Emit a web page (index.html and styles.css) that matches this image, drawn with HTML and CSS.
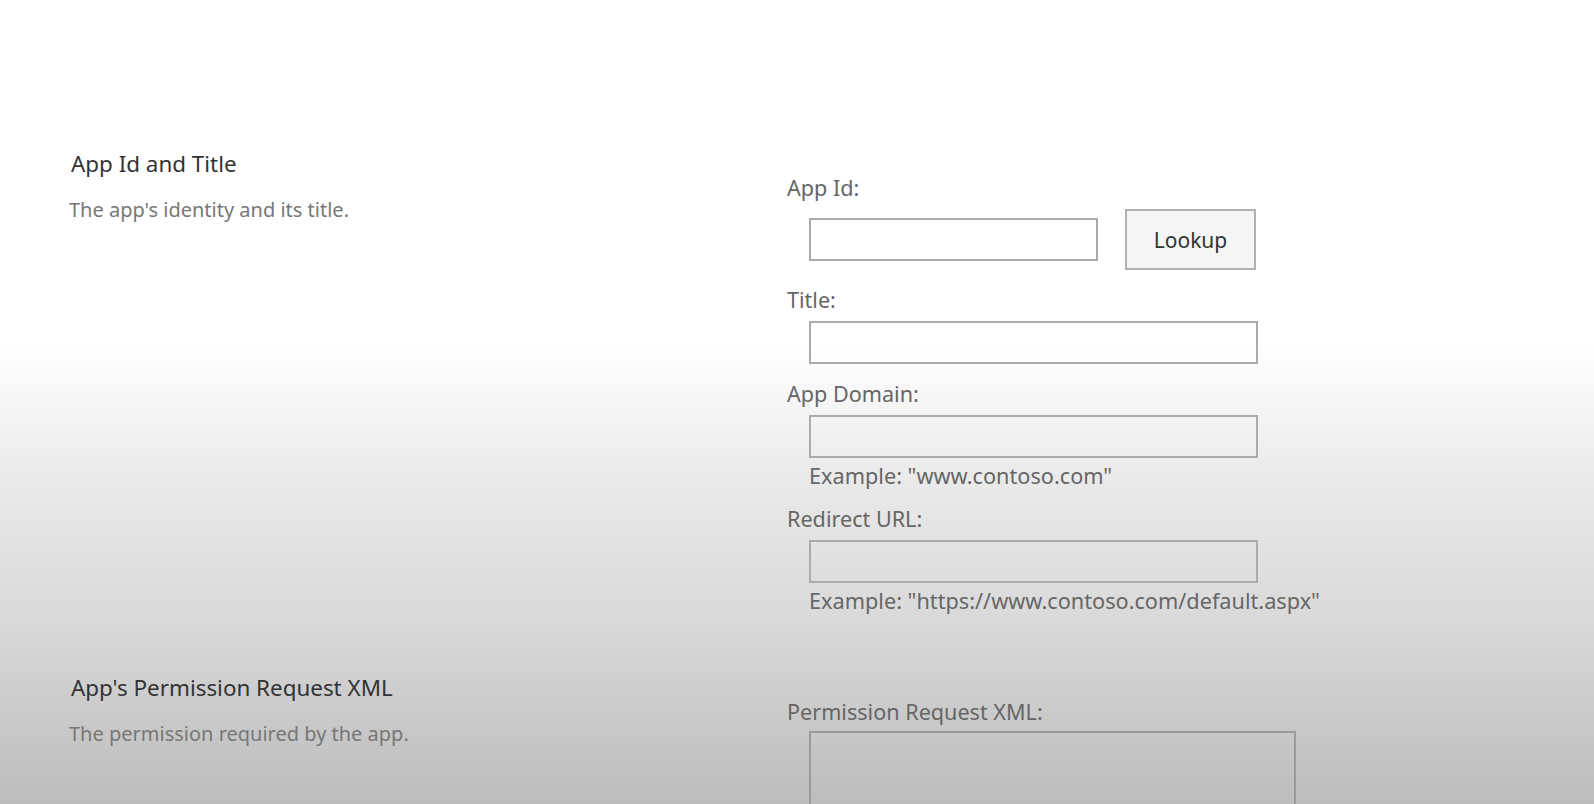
FILE: index.html
```html
<!DOCTYPE html>
<html lang="en">
<head>
  <meta charset="UTF-8" />
  <title>Register an App</title>
  <link rel="stylesheet" href="styles.css">
</head>
<body>
  <div class="page">
    <div class="section">
      <div class="section-info">
        <h3>App Id and Title</h3>
        <p>The app's identity and its title.</p>
      </div>
      <div class="section-fields">
        <div class="field">
          <label>App Id:</label>
          <div class="row">
            <input type="text" class="input short">
            <button class="btn">Lookup</button>
          </div>
        </div>
        <div class="field">
          <label>Title:</label>
          <div class="row">
            <input type="text" class="input">
          </div>
        </div>
        <div class="field">
          <label>App Domain:</label>
          <div class="row">
            <input type="text" class="input">
          </div>
          <div class="hint">Example: "www.contoso.com"</div>
        </div>
        <div class="field">
          <label>Redirect URL:</label>
          <div class="row">
            <input type="text" class="input">
          </div>
          <div class="hint">Example: "https://www.contoso.com/default.aspx"</div>
        </div>
      </div>
    </div>

    <div class="section">
      <div class="section-info">
        <h3>App's Permission Request XML</h3>
        <p>The permission required by the app.</p>
      </div>
      <div class="section-fields">
        <div class="field">
          <label>Permission Request XML:</label>
          <div class="row tight">
            <textarea class="xml"></textarea>
          </div>
        </div>
      </div>
    </div>
  </div>
</body>
</html>
```

FILE: styles.css
```css
html, body {
  height: 100%;
}
body {
  margin: 0;
  overflow: hidden;
  font-family: "Noto Sans", "Open Sans", sans-serif;
  background: linear-gradient(to bottom, #ffffff 0, #ffffff 345px, #ebebeb 470px, #d9d9d9 620px, #bcbcbc 804px);
}
.page {
  padding: 149px 0 0 71px;
}
.section {
  display: grid;
  grid-template-columns: 716px 1fr;
}
.section + .section {
  margin-top: 42px;
}
.section-info h3 {
  margin: 0;
  font-size: 22.4px;
  font-weight: normal;
  line-height: 30px;
  color: #333;
}
.section-info p {
  margin: 18px 0 0 -2px;
  font-size: 20px;
  line-height: 26px;
  color: #777;
}
.section-fields {
  padding-top: 26px;
}
.field {
  margin-bottom: 17px;
}
.field label {
  display: block;
  font-size: 21.6px;
  line-height: 26px;
  color: #666;
}
.row {
  display: flex;
  align-items: center;
  gap: 27px;
  margin: 8px 0 0 22px;
}
.row.tight {
  margin-top: 6px;
}
.input {
  box-sizing: border-box;
  width: 449px;
  height: 43px;
  border: 2px solid #ababab;
  background: transparent;
  font: inherit;
}
.input.short {
  width: 289px;
}
.btn {
  box-sizing: border-box;
  width: 131px;
  height: 61px;
  border: 2px solid #b0b0b0;
  background: rgba(0, 0, 0, 0.04);
  font-family: inherit;
  font-size: 21px;
  color: #333;
}
.hint {
  margin: 5px 0 0 22px;
  font-size: 21.7px;
  line-height: 26px;
  color: #666;
}
.xml {
  box-sizing: border-box;
  width: 487px;
  height: 140px;
  border: 2px solid #9a9a9a;
  background: transparent;
  resize: none;
}
```
